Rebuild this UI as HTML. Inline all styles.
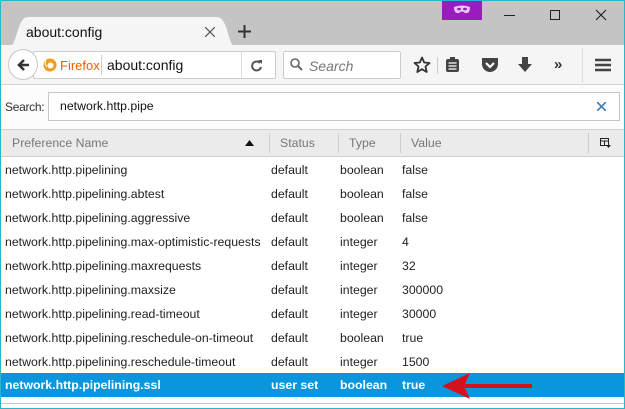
<!DOCTYPE html>
<html><head><style>
*{margin:0;padding:0;box-sizing:border-box}
body{width:625px;height:409px;overflow:hidden;font-family:"Liberation Sans",sans-serif;font-size:12px;color:#222;background:#fff;position:relative}
.a{position:absolute}
#win{position:absolute;left:0;top:0;width:625px;height:409px;border:1px solid #2bb5c8;pointer-events:none;z-index:9}
.row{position:absolute;left:1px;width:623px;height:24px;line-height:24px;font-size:12.3px}
.row span{position:absolute;top:0;white-space:nowrap}
.c1{left:4px}.c2{left:270px}.c3{left:339px}.c4{left:401px}
.hd{color:#777;font-size:12.3px}
</style></head><body>
<div id="win"></div>
<div class="a" style="left:0;top:0;width:625px;height:46px;background:#c4c4c4"></div>
<div class="a" style="left:442px;top:1px;width:40px;height:19px;background:#9a1bc0"></div>
<svg class="a" style="left:453px;top:5px" width="18" height="10"><path d="M1 2 Q9 -1 17 2 Q17 9 12 8 Q9 5 6 8 Q1 9 1 2Z" fill="#e8c8f4"/><ellipse cx="6" cy="4" rx="2" ry="1.3" fill="#9a1bc0"/><ellipse cx="12" cy="4" rx="2" ry="1.3" fill="#9a1bc0"/></svg>
<div class="a" style="left:504px;top:15px;width:11px;height:1px;background:#222"></div>
<div class="a" style="left:550px;top:10px;width:10px;height:10px;border:1px solid #222"></div>
<svg class="a" style="left:595px;top:9px" width="12" height="12"><path d="M1 1L11 11M11 1L1 11" stroke="#222" stroke-width="1.2"/></svg>
<svg class="a" style="left:10px;top:17px" width="225" height="30"><path d="M0 29 C7 29 7 0 18 0 L207 0 C218 0 218 29 225 29Z" fill="#f5f5f5"/></svg>
<div class="a" style="left:26px;top:24px;font-size:14px;color:#111">about:config</div>
<svg class="a" style="left:205px;top:27px" width="10" height="10"><path d="M0 0L10 10M10 0L0 10" stroke="#555" stroke-width="1.2"/></svg>
<svg class="a" style="left:238px;top:25px" width="13" height="13"><path d="M6.5 0V13M0 6.5H13" stroke="#333" stroke-width="2"/></svg>
<div class="a" style="left:0;top:45px;width:625px;height:40px;background:#f5f5f5;border-bottom:1px solid #d4d4d4"></div>
<div class="a" style="left:33px;top:51px;width:243px;height:28px;background:#fff;border:1px solid #ccc;border-radius:2px"></div>
<div class="a" style="left:8px;top:49px;width:30px;height:31px;border-radius:50%;background:#fff;border:1px solid #c8c8c8"></div>
<svg class="a" style="left:16px;top:58px" width="14" height="14"><path d="M13 7H3M8 2L3 7L8 12" stroke="#333" stroke-width="2.6" fill="none"/></svg>
<svg class="a" style="left:43px;top:58px" width="14" height="14"><circle cx="7" cy="7" r="6.5" fill="#f29b1d"/><circle cx="7.5" cy="7.5" r="3" fill="#fff"/><path d="M3 2 Q1 6 4 9" stroke="#fff" stroke-width="1" fill="none"/></svg>
<div class="a" style="left:60px;top:58px;font-size:13px;color:#e66000">Firefox</div>
<div class="a" style="left:101px;top:55px;width:1px;height:20px;background:#ccc"></div>
<div class="a" style="left:107px;top:57px;font-size:14px;color:#111">about:config</div>
<div class="a" style="left:241px;top:52px;width:1px;height:26px;background:#ddd"></div>
<svg class="a" style="left:250px;top:59px" width="13" height="13"><path d="M10 4A4.5 4.5 0 1 0 11 8" stroke="#555" stroke-width="2" fill="none"/><path d="M8 1H12V5Z" fill="#555"/></svg>
<div class="a" style="left:283px;top:51px;width:118px;height:28px;background:#fff;border:1px solid #ccc;border-radius:2px"></div>
<svg class="a" style="left:290px;top:58px" width="13" height="13"><circle cx="5" cy="5" r="4" stroke="#666" stroke-width="1.6" fill="none"/><path d="M8 8L12 12" stroke="#666" stroke-width="2"/></svg>
<div class="a" style="left:309px;top:58px;font-size:14px;font-style:italic;color:#777">Search</div>
<svg class="a" style="left:413px;top:56px" width="18" height="18"><path d="M9 1.5L11.2 6.5 16.5 7 12.5 10.5 13.7 16 9 13.2 4.3 16 5.5 10.5 1.5 7 6.8 6.5Z" stroke="#333" stroke-width="1.8" fill="none" stroke-linejoin="round"/></svg>
<div class="a" style="left:437px;top:57px;width:1px;height:17px;background:#ccc"></div>
<svg class="a" style="left:445px;top:57px" width="15" height="16"><rect x="1" y="2" width="13" height="13" rx="2" fill="#444"/><rect x="5" y="0" width="5" height="3" fill="#444"/><path d="M3.5 6H11.5M3.5 9H11.5M3.5 12H11.5" stroke="#fff" stroke-width="1.2"/></svg>
<svg class="a" style="left:481px;top:57px" width="18" height="16"><path d="M1 1H17V7A8 8 0 0 1 1 7Z" fill="#444"/><path d="M5 6L9 10L13 6" stroke="#fff" stroke-width="2.2" fill="none"/></svg>
<svg class="a" style="left:517px;top:57px" width="16" height="16"><path d="M5 0H11V7H15L8 15L1 7H5Z" fill="#444"/></svg>
<div class="a" style="left:554px;top:56px;font-size:15px;font-weight:bold;color:#333">»</div>
<div class="a" style="left:582px;top:48px;width:1px;height:35px;background:#ddd"></div>
<svg class="a" style="left:595px;top:58px" width="16" height="14"><path d="M0 2H16M0 7H16M0 12H16" stroke="#444" stroke-width="2.6"/></svg>
<div class="a" style="left:1px;top:86px;width:623px;height:43px;background:#fcfcfc"></div>
<div class="a" style="left:5px;top:100px;font-size:12px;color:#333;letter-spacing:-0.3px">Search:</div>
<div class="a" style="left:48px;top:92px;width:572px;height:29px;background:#fff;border:1px solid #c6c6c6"></div>
<div class="a" style="left:60px;top:99px;font-size:12.3px;color:#111">network.http.pipe</div>
<svg class="a" style="left:597px;top:102px" width="9" height="9"><path d="M0 0L9 9M9 0L0 9" stroke="#3a78b8" stroke-width="1.6"/></svg>
<div class="a" style="left:1px;top:129px;width:623px;height:28px;background:#ebebeb;border-top:1px solid #d0d0d0;border-bottom:1px solid #cfcfcf"></div>
<div class="a hd" style="left:12px;top:136px">Preference Name</div>
<svg class="a" style="left:245px;top:140px" width="9" height="6"><path d="M0 6L4.5 0L9 6Z" fill="#111"/></svg>
<div class="a" style="left:269px;top:133px;width:1px;height:20px;background:#ccc"></div>
<div class="a hd" style="left:280px;top:136px">Status</div>
<div class="a" style="left:338px;top:133px;width:1px;height:20px;background:#ccc"></div>
<div class="a hd" style="left:349px;top:136px">Type</div>
<div class="a" style="left:400px;top:133px;width:1px;height:20px;background:#ccc"></div>
<div class="a hd" style="left:411px;top:136px">Value</div>
<div class="a" style="left:588px;top:133px;width:1px;height:20px;background:#ccc"></div>
<svg class="a" style="left:600px;top:138px" width="11" height="10"><rect x="0.5" y="0.5" width="8" height="7" fill="none" stroke="#222"/><path d="M0 3H9M4.5 3V8" stroke="#222"/><path d="M6 7H11L8.5 10Z" fill="#222"/></svg>

<div class="row" style="top:158px"><span class="c1">network.http.pipelining</span><span class="c2">default</span><span class="c3">boolean</span><span class="c4">false</span></div>
<div class="row" style="top:182px"><span class="c1">network.http.pipelining.abtest</span><span class="c2">default</span><span class="c3">boolean</span><span class="c4">false</span></div>
<div class="row" style="top:206px"><span class="c1">network.http.pipelining.aggressive</span><span class="c2">default</span><span class="c3">boolean</span><span class="c4">false</span></div>
<div class="row" style="top:230px"><span class="c1">network.http.pipelining.max-optimistic-requests</span><span class="c2">default</span><span class="c3">integer</span><span class="c4">4</span></div>
<div class="row" style="top:254px"><span class="c1">network.http.pipelining.maxrequests</span><span class="c2">default</span><span class="c3">integer</span><span class="c4">32</span></div>
<div class="row" style="top:278px"><span class="c1">network.http.pipelining.maxsize</span><span class="c2">default</span><span class="c3">integer</span><span class="c4">300000</span></div>
<div class="row" style="top:302px"><span class="c1">network.http.pipelining.read-timeout</span><span class="c2">default</span><span class="c3">integer</span><span class="c4">30000</span></div>
<div class="row" style="top:326px"><span class="c1">network.http.pipelining.reschedule-on-timeout</span><span class="c2">default</span><span class="c3">boolean</span><span class="c4">true</span></div>
<div class="row" style="top:350px"><span class="c1">network.http.pipelining.reschedule-timeout</span><span class="c2">default</span><span class="c3">integer</span><span class="c4">1500</span></div>
<div class="row" style="top:373px;background:#0a96dc;color:#fff;font-weight:bold"><span class="c1">network.http.pipelining.ssl</span><span class="c2">user set</span><span class="c3">boolean</span><span class="c4">true</span></div>
<svg class="a" style="left:434px;top:372px" width="100" height="28"><path d="M98 14H30" stroke="#d4121b" stroke-width="4"/><path d="M8 14L36 1L30 14L36 27Z" fill="#d4121b"/></svg>
<div class="a" style="left:1px;top:403px;width:623px;height:1px;background:#c8c8c8"></div>
</body></html>
